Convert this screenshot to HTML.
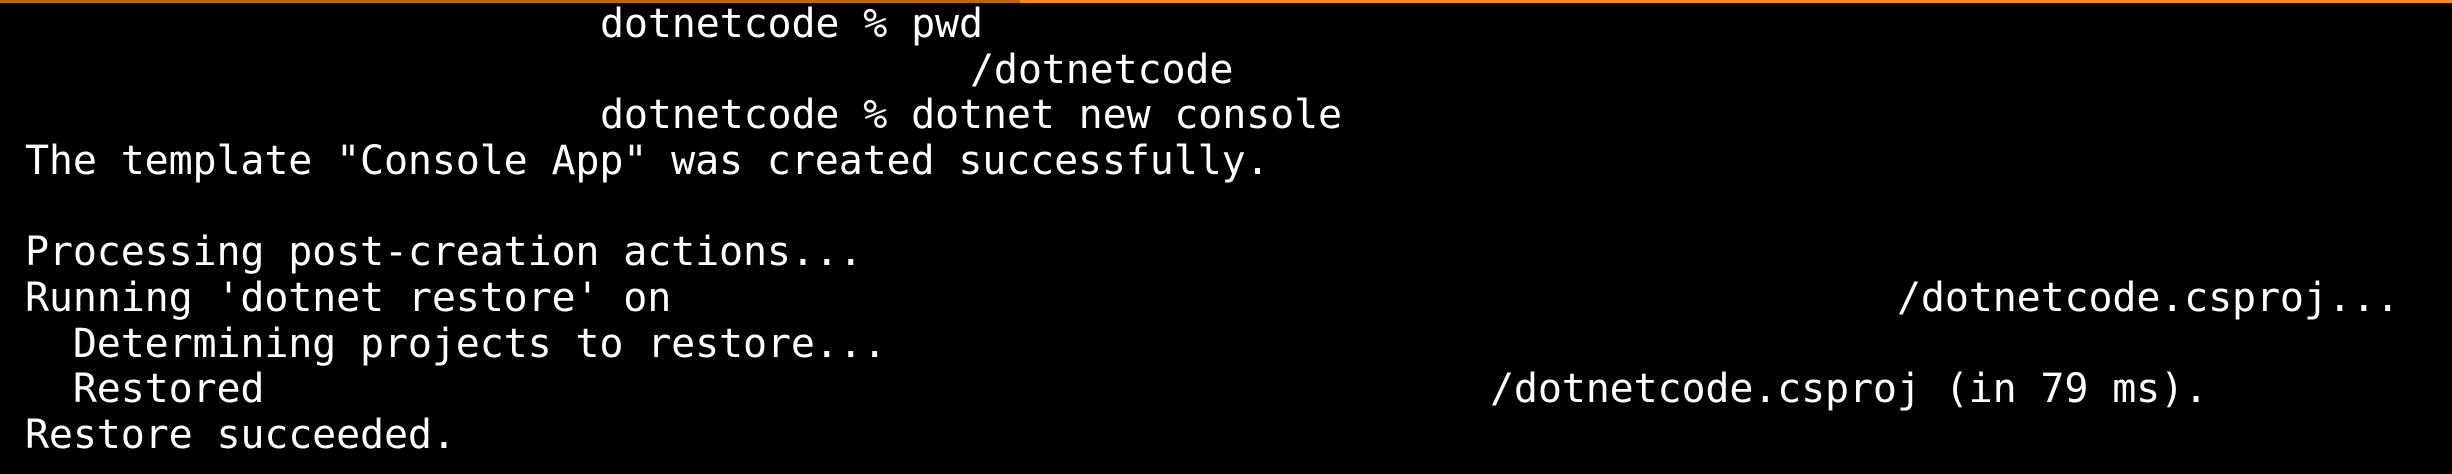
<!DOCTYPE html>
<html><head><meta charset="utf-8"><style>
html,body{margin:0;padding:0;background:#000;width:2452px;height:474px;overflow:hidden}
.bar{position:absolute;left:0;top:0;width:2452px;height:3px;background:#f08a1c}
.bar2{position:absolute;left:0;top:0;width:1020px;height:3px;background:#b8661a}
.t{position:absolute;color:#fff;font-family:"DejaVu Sans Mono","Liberation Mono",monospace;font-size:40px;letter-spacing:-0.15px;white-space:pre;line-height:46px}
</style></head><body>
<div class="bar"></div><div class="bar2"></div>
<div class="t" style="left:600px;top:1px">dotnetcode % pwd</div>
<div class="t" style="left:970px;top:47px">/dotnetcode</div>
<div class="t" style="left:600px;top:92px">dotnetcode % dotnet new console</div>
<div class="t" style="left:25px;top:138px">The template "Console App" was created successfully.</div>
<div class="t" style="left:25px;top:229px">Processing post-creation actions...</div>
<div class="t" style="left:25px;top:275px">Running 'dotnet restore' on</div>
<div class="t" style="left:1897px;top:275px">/dotnetcode.csproj...</div>
<div class="t" style="left:25px;top:321px">  Determining projects to restore...</div>
<div class="t" style="left:25px;top:366px">  Restored</div>
<div class="t" style="left:1490px;top:366px">/dotnetcode.csproj (in 79 ms).</div>
<div class="t" style="left:25px;top:412px">Restore succeeded.</div>
</body></html>
